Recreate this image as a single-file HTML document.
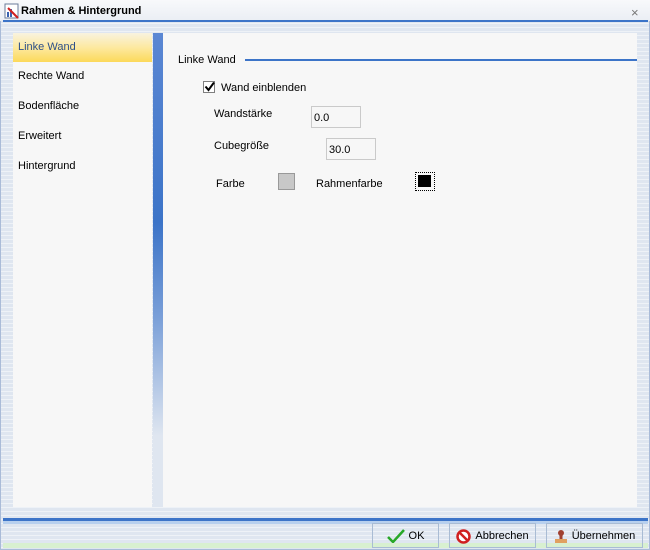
<!DOCTYPE html><html><head><style>
body{margin:0;width:650px;height:550px;overflow:hidden;font-family:"Liberation Sans",sans-serif;font-size:11px;color:#000;
background:repeating-linear-gradient(#dfe6f0 0 3px,#eef2f7 3px 4px);position:relative}
.a{position:absolute}
.t{position:absolute;margin-top:1px}
.frame{left:0;top:0;width:648px;height:548px;border:1px solid #a9bbd8}
.tb{position:absolute;background:#f7f7f7;border:1px solid #cacaca;height:20px;box-sizing:border-box;padding:5px 2px;font-size:11px}
.btn{position:absolute;top:523px;height:25px;border:1px solid #a9bcd4;box-sizing:border-box;display:flex;align-items:center;justify-content:center;gap:4px;font-size:11px;padding-top:1px}
</style></head><body>
<div class="a frame"></div>
<div class="a" style="left:0;top:0;width:650px;height:21px;background:linear-gradient(#f8f9fb,#eaeef4)"></div>
<svg class="a" style="left:4px;top:3px" width="16" height="16"><rect x="1" y="1" width="13" height="14" fill="#fff" stroke="#6a7b99"/><rect x="3" y="9" width="2" height="5" fill="#3a62b0"/><rect x="6" y="6" width="2" height="8" fill="#3a62b0"/><path d="M4 5 L14 15" stroke="#d02020" stroke-width="2"/></svg>
<div class="t" style="left:21px;top:4px;font-weight:bold;font-size:11px">Rahmen &amp; Hintergrund</div>
<div class="a" style="left:631px;top:5px;font-size:13px;color:#777">×</div>
<div class="a" style="left:3px;top:20px;width:645px;height:2px;background:#3c74c8"></div>
<div class="a" style="left:13px;top:33px;width:139px;height:474px;background:#f7f7f7"></div>
<div class="a" style="left:13px;top:33px;width:139px;height:29px;background:linear-gradient(#f8f3e0,#fde9a0 50%,#fcd95a)"></div>
<div class="t" style="left:18px;top:40px;color:#2d4f8a">Linke Wand</div>
<div class="t" style="left:18px;top:69px">Rechte Wand</div>
<div class="t" style="left:18px;top:99px">Bodenfläche</div>
<div class="t" style="left:18px;top:129px">Erweitert</div>
<div class="t" style="left:18px;top:159px">Hintergrund</div>
<div class="a" style="left:153px;top:33px;width:10px;height:474px;background:linear-gradient(#5b87d3,#3c74c8 40%,#7a9fd8 60%,#dfe6f0 85%)"></div>
<div class="a" style="left:163px;top:33px;width:474px;height:474px;background:#f7f7f7"></div>
<div class="t" style="left:178px;top:53px">Linke Wand</div>
<div class="a" style="left:245px;top:59px;width:392px;height:2px;background:#3c74c8"></div>
<div class="a" style="left:203px;top:81px;width:12px;height:12px;border:1px solid #7f7f7f;background:#fff;box-sizing:border-box"></div>
<svg class="a" style="left:204px;top:81px" width="11" height="11"><path d="M1.5 5.5 L4.5 9 L10 1.5" stroke="#000" stroke-width="2" fill="none"/></svg>
<div class="t" style="left:221px;top:81px">Wand einblenden</div>
<div class="t" style="left:214px;top:107px">Wandstärke</div>
<div class="tb" style="left:311px;top:106px;width:50px;height:22px">0.0</div>
<div class="t" style="left:214px;top:139px">Cubegröße</div>
<div class="tb" style="left:326px;top:138px;width:50px;height:22px">30.0</div>
<div class="t" style="left:216px;top:177px">Farbe</div>
<div class="a" style="left:278px;top:173px;width:17px;height:17px;background:#c8c8c8;border:1px solid #999;box-sizing:border-box"></div>
<div class="t" style="left:316px;top:177px">Rahmenfarbe</div>
<div class="a" style="left:415px;top:172px;width:20px;height:19px;border:1px dotted #000;box-sizing:border-box;padding:2px"><div style="width:13px;height:12px;background:#000"></div></div>
<div class="a" style="left:3px;top:518px;width:645px;height:3px;background:#3c74c8"></div>
<div class="a" style="left:3px;top:521px;width:645px;height:3px;background:#b8d0ee"></div>
<div class="a" style="left:3px;top:543px;width:645px;height:5px;background:#d8f0d0"></div>
<div class="btn" style="left:372px;width:67px"><svg width="18" height="14"><path d="M1 8 L6 13 L17 1" stroke="#28a828" stroke-width="2.5" fill="none"/></svg>OK</div>
<div class="btn" style="left:449px;width:87px"><svg width="15" height="15"><circle cx="7.5" cy="7.5" r="6" fill="#fff" stroke="#d02020" stroke-width="2.5"/><path d="M3.5 3.5 L11.5 11.5" stroke="#d02020" stroke-width="2.5"/></svg>Abbrechen</div>
<div class="btn" style="left:546px;width:97px"><svg width="14" height="15"><circle cx="7" cy="4" r="3" fill="#a04030"/><rect x="5.5" y="6" width="3" height="4" fill="#a04030"/><rect x="1" y="10" width="12" height="4" fill="#e0a060"/></svg>Übernehmen</div>
</body></html>
